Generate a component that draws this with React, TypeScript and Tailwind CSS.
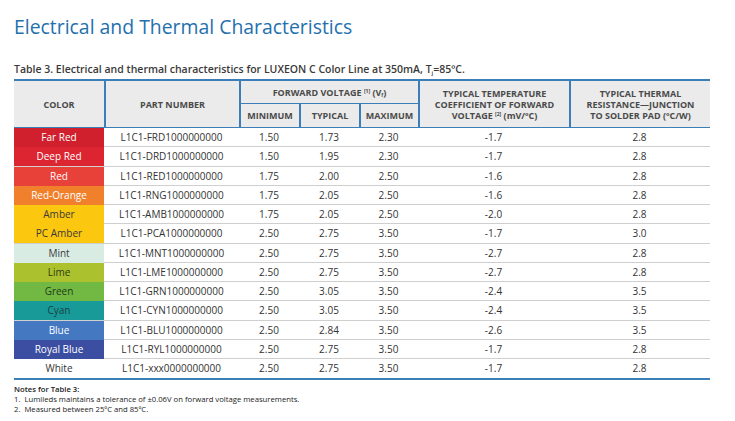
const rows = [
  { color: "Far Red", bg: "bg-[#d0202e]", fg: "text-white", part: "L1C1-FRD1000000000", min: "1.50", typ: "1.73", max: "2.30", tc: "-1.7", th: "2.8" },
  { color: "Deep Red", bg: "bg-[#dc2530]", fg: "text-white", part: "L1C1-DRD1000000000", min: "1.50", typ: "1.95", max: "2.30", tc: "-1.7", th: "2.8" },
  { color: "Red", bg: "bg-[#e8413a]", fg: "text-white", part: "L1C1-RED1000000000", min: "1.75", typ: "2.00", max: "2.50", tc: "-1.6", th: "2.8" },
  { color: "Red-Orange", bg: "bg-[#f0802c]", fg: "text-white", part: "L1C1-RNG1000000000", min: "1.75", typ: "2.05", max: "2.50", tc: "-1.6", th: "2.8" },
  { color: "Amber", bg: "bg-[#fcc70f]", fg: "text-[#3a3a3a]", part: "L1C1-AMB1000000000", min: "1.75", typ: "2.05", max: "2.50", tc: "-2.0", th: "2.8" },
  { color: "PC Amber", bg: "bg-[#fcc70f]", fg: "text-[#3a3a3a]", part: "L1C1-PCA1000000000", min: "2.50", typ: "2.75", max: "3.50", tc: "-1.7", th: "3.0" },
  { color: "Mint", bg: "bg-[#d9ece4]", fg: "text-[#3a3a3a]", part: "L1C1-MNT1000000000", min: "2.50", typ: "2.75", max: "3.50", tc: "-2.7", th: "2.8" },
  { color: "Lime", bg: "bg-[#abc22e]", fg: "text-[#2e3a10]", part: "L1C1-LME1000000000", min: "2.50", typ: "2.75", max: "3.50", tc: "-2.7", th: "2.8" },
  { color: "Green", bg: "bg-[#72b944]", fg: "text-[#1f3a17]", part: "L1C1-GRN1000000000", min: "2.50", typ: "3.05", max: "3.50", tc: "-2.4", th: "3.5" },
  { color: "Cyan", bg: "bg-[#189b98]", fg: "text-[#173f44]", part: "L1C1-CYN1000000000", min: "2.50", typ: "3.05", max: "3.50", tc: "-2.4", th: "3.5" },
  { color: "Blue", bg: "bg-[#4479c2]", fg: "text-white", part: "L1C1-BLU1000000000", min: "2.50", typ: "2.84", max: "3.50", tc: "-2.6", th: "3.5" },
  { color: "Royal Blue", bg: "bg-[#3c4ea2]", fg: "text-white", part: "L1C1-RYL1000000000", min: "2.50", typ: "2.75", max: "3.50", tc: "-1.7", th: "2.8" },
  { color: "White", bg: "bg-white", fg: "text-[#333]", part: "L1C1-xxx0000000000", min: "2.50", typ: "2.75", max: "3.50", tc: "-1.7", th: "2.8" },
];

const cols = "grid grid-cols-[90px_135px_60px_60px_59px_151px_141px]";

export default function App() {
  return (
    <div className="w-[735px] h-[421px] bg-white font-['Open_Sans',sans-serif] text-[#333] pl-[14px] overflow-hidden">
      <h1 className="pt-[13px] text-[19.4px] leading-[27px] text-[#2470ad]">
        Electrical and Thermal Characteristics
      </h1>
      <p className="mt-[22px] text-[10.5px] leading-[14px] font-semibold text-[#3a3a3a]">
        Table 3. Electrical and thermal characteristics for LUXEON C Color Line at 350mA, T
        <sub className="text-[6px]">j</sub>=85ºC.
      </p>

      <div className="mt-[3px] w-[696px]">
        {/* header */}
        <div className={`${cols} grid-rows-[23px_23px] bg-[#ebebeb] border-t-2 border-b border-[#3c7fb8] text-[9px] font-bold text-[#4a4a4a] leading-[11px] text-center`}>
          <div className="row-span-2 flex items-center justify-center">COLOR</div>
          <div className="row-span-2 flex items-center justify-center border-l-2 border-[#3c7fb8]">PART NUMBER</div>
          <div className="col-span-3 flex items-center justify-center border-l-2 border-b border-[#3c7fb8]">
            <span>
              FORWARD VOLTAGE <sup className="text-[5px] leading-none">[1]</sup> (V<sub className="text-[5px] leading-none">f</sub>)
            </span>
          </div>
          <div className="row-span-2 flex flex-col items-center justify-center border-l-2 border-[#3c7fb8]">
            <span>TYPICAL TEMPERATURE</span>
            <span>COEFFICIENT OF FORWARD</span>
            <span>
              VOLTAGE <sup className="text-[5px] leading-none">[2]</sup> (mV/ºC)
            </span>
          </div>
          <div className="row-span-2 flex flex-col items-center justify-center border-l-2 border-[#3c7fb8]">
            <span>TYPICAL THERMAL</span>
            <span>RESISTANCE—JUNCTION</span>
            <span>TO SOLDER PAD (ºC/W)</span>
          </div>
          <div className="col-start-3 flex items-center justify-center border-l-2 border-[#3c7fb8]">MINIMUM</div>
          <div className="flex items-center justify-center border-l-2 border-[#3c7fb8]">TYPICAL</div>
          <div className="flex items-center justify-center border-l-2 border-[#3c7fb8]">MAXIMUM</div>
        </div>

        {/* body */}
        <div className="border-b-2 border-[#3c7fb8]">
          {rows.map((r, i) => (
            <div
              key={r.part}
              className={`${cols} h-[19.25px] text-[10px] leading-[19px] text-center ${i < rows.length - 1 ? "border-b border-[#cfcfcf]" : ""}`}
            >
              <div className={`${r.bg} ${r.fg}`}>{r.color}</div>
              <div>{r.part}</div>
              <div>{r.min}</div>
              <div>{r.typ}</div>
              <div>{r.max}</div>
              <div>{r.tc}</div>
              <div>{r.th}</div>
            </div>
          ))}
        </div>
      </div>

      <div className="mt-[4px] text-[7.7px] leading-[10px] text-[#222]">
        <p className="font-semibold">Notes for Table 3:</p>
        <p>1.&nbsp;&nbsp;Lumileds maintains a tolerance of ±0.06V on forward voltage measurements.</p>
        <p>2.&nbsp;&nbsp;Measured between 25ºC and 85ºC.</p>
      </div>
    </div>
  );
}
